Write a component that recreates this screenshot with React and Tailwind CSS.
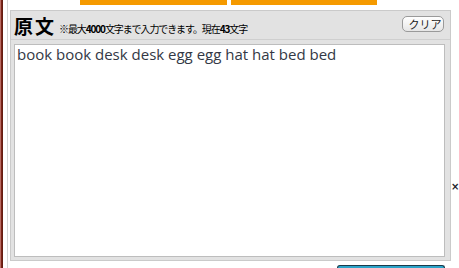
import React, { useState } from 'react';

const App = () => {
  const [text, setText] = useState('book book desk desk egg egg hat hat bed bed');

  return (
    <div className="w-[459px] h-[268px] overflow-hidden bg-white flex font-['Noto_Sans_CJK_JP',sans-serif]">
      {/* left edge strip */}
      <div className="w-[3px] shrink-0 h-full bg-gradient-to-r from-[#d9908a] via-[#7a2418] to-[#5a1a10]" />
      <div className="w-[4px] shrink-0" />
      <div className="w-px shrink-0 h-full bg-[#d4d4d4]" />
      <div className="w-[2px] shrink-0" />

      <div className="w-[441px] shrink-0 flex flex-col">
        {/* top tabs */}
        <div className="h-[5px] flex gap-[4px] pl-[70px]">
          <div className="w-[147px] bg-[#f59a00]" />
          <div className="w-[146px] bg-[#f59a00]" />
        </div>
        <div className="h-[5px]" />

        {/* panel */}
        <div className="h-[251px] border border-[#cacaca] bg-[#e2e2e2] flex flex-col">
          <div className="h-[29px] flex items-end justify-between pl-[3px] pr-[6px] border-b border-[#cfcfcf]">
            <div className="flex items-end gap-[3px] pb-[2px]">
              <span className="text-[19px] leading-[22px] font-bold text-black tracking-[2px]">原文</span>
              <span className="text-[10px] leading-[14px] text-black pb-[1px] tracking-[-1.1px]">
                ※最大<b>4000</b>文字まで入力できます。現在<b>43</b>文字
              </span>
            </div>
            <button
              onClick={() => setText('')}
              className="mb-[7px] w-[42px] h-[16px] rounded-[5px] border border-[#9a9a9a] bg-gradient-to-b from-white to-[#e6e6e6] text-[11px] leading-[14px] text-[#222] flex items-center justify-center pl-[4px]"
            >
              クリア
            </button>
          </div>
          <div className="flex-1 pt-[4px] pl-[3px] pr-[5px] pb-[3px]">
            <textarea
              value={text}
              onChange={(e) => setText(e.target.value)}
              className="block w-full h-full resize-none border border-[#bdbdbd] bg-white px-[2px] py-[1px] text-[15px] leading-[17px] text-[#333845] font-['Open_Sans',sans-serif] outline-none"
            />
          </div>
        </div>

        {/* bottom button peek */}
        <div className="flex-1 flex items-end pl-[327px]">
          <div className="w-[108px] h-[3px] rounded-t-[3px] border-t border-x border-[#1a3a4a] bg-[#2ba3c9]" />
        </div>
      </div>

      <div className="flex-1 min-w-0 flex flex-col pt-[181px]">
        <span className="text-[10px] leading-[12px] font-bold text-[#1a1a2a] font-['DejaVu_Sans',sans-serif]">×</span>
      </div>
    </div>
  );
};

export default App;
